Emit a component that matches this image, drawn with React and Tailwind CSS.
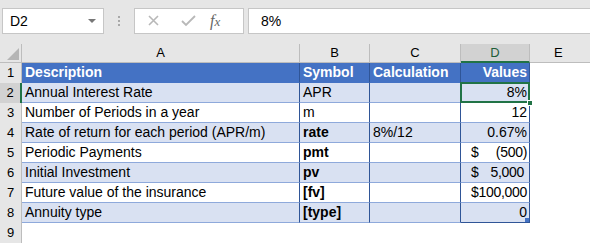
const rows = [
  { n: 1, a: "Description", b: "Symbol", c: "Calculation", d: "Values", head: true },
  { n: 2, a: "Annual Interest Rate", b: "APR", c: "", d: "8%", band: true },
  { n: 3, a: "Number of Periods in a year", b: "m", c: "", d: "12" },
  { n: 4, a: "Rate of return for each period (APR/m)", b: "rate", c: "8%/12", d: "0.67%", band: true, bold: true },
  { n: 5, a: "Periodic Payments", b: "pmt", c: "", d: ["$", "(500)", ""], bold: true },
  { n: 6, a: "Initial Investment", b: "pv", c: "", d: ["$", "5,000", "pad"], band: true, bold: true },
  { n: 7, a: "Future value of the insurance", b: "[fv]", c: "", d: ["", "$100,000", "pad"], bold: true },
  { n: 8, a: "Annuity type", b: "[type]", c: "", d: "0", band: true, bold: true, last: true },
];

const font = { fontFamily: "'Liberation Sans', Arial, sans-serif" };

function ValueCell({ v }) {
  if (Array.isArray(v)) {
    return (
      <div className="flex w-full items-center justify-between pl-[10px]">
        <span>{v[0]}</span>
        <span className={`tracking-[-0.3px] ${v[2] === "pad" ? "pr-[5px]" : "pr-[2px]"}`}>{v[1]}</span>
      </div>
    );
  }
  return <div className="w-full pr-[2px] text-right">{v}</div>;
}

export default function App() {
  return (
    <div className="h-[243px] w-[590px] overflow-hidden bg-[#e6e6e6] text-[14px] text-black" style={font}>
      {/* formula bar */}
      <div className="flex h-[44px] items-start pt-[8px]">
        <div className="ml-[2px] flex h-[26px] w-[102px] items-center justify-between border border-[#c6c6c6] bg-white pl-[7px] pr-[7px] text-[14px]">
          <span>D2</span>
          <span className="h-0 w-0 border-x-[4px] border-t-[4px] border-x-transparent border-t-[#777]" />
        </div>
        <div className="flex h-[26px] w-[30px] flex-col items-center justify-center gap-[2px]">
          <span className="h-[2px] w-[2px] bg-[#a8a8a8]" />
          <span className="h-[2px] w-[2px] bg-[#a8a8a8]" />
          <span className="h-[2px] w-[2px] bg-[#a8a8a8]" />
        </div>
        <div className="flex h-[26px] w-[110px] items-center border border-[#c6c6c6] bg-white">
          <svg width="36" height="24" viewBox="0 0 36 24">
            <path d="M14 7l9 9M23 7l-9 9" stroke="#b8b8b8" strokeWidth="1.6" fill="none" />
          </svg>
          <svg width="36" height="24" viewBox="0 0 36 24">
            <path d="M11 12l4 4 9-9" stroke="#b8b8b8" strokeWidth="1.8" fill="none" />
          </svg>
          <span className="ml-[3px] text-[16px] italic text-[#666]" style={{ fontFamily: "'Liberation Serif', serif" }}>
            f<span className="text-[13px]">x</span>
          </span>
        </div>
        <div className="ml-[4px] flex h-[26px] flex-1 items-center border border-[#c6c6c6] border-r-0 bg-white pl-[12px]">
          8%
        </div>
      </div>

      {/* sheet */}
      <div className="grid grid-cols-[22px_278px_70px_91px_69px_1fr] bg-white">
        {/* column headers */}
        <div className="relative h-[19px] border-b border-r border-[#bdbdbd] bg-[#e6e6e6]">
          <span className="absolute bottom-[2px] right-[2px] h-0 w-0 border-b-[12px] border-l-[12px] border-b-[#b5b5b5] border-l-transparent" />
        </div>
        {["A", "B", "C"].map((c) => (
          <div key={c} className="flex h-[19px] items-center justify-center border-b border-r border-[#bdbdbd] bg-[#e6e6e6] text-[13px]">
            {c}
          </div>
        ))}
        <div className="flex h-[19px] items-center justify-center border-b-2 border-r border-b-[#217346] border-r-[#bdbdbd] bg-[#d2d2d2] text-[13px] text-[#1e5e3a]">
          D
        </div>
        <div className="flex h-[19px] items-center justify-start border-b border-[#bdbdbd] bg-[#e6e6e6] pl-[24px] text-[13px]">
          E
        </div>

        {rows.map((r) => {
          const bg = r.head ? "bg-[#4472c4] text-white font-bold" : r.band ? "bg-[#d9e1f2]" : "bg-white";
          const line = r.head ? "border-b border-[#4472c4]" : "border-b border-[#8ea9db]";
          return [
            <div
              key={r.n + "h"}
              className={`flex h-[20px] items-center justify-center border-r text-[13px] ${
                r.n === 2 ? "border-r-2 border-r-[#217346] bg-[#d2d2d2]" : "border-r-[#bdbdbd] bg-[#e6e6e6]"
              }`}
            >
              {r.n}
            </div>,
            <div key={r.n + "a"} className={`flex h-[20px] items-center pl-[3px] border-r border-r-[#2f5597] ${line} ${bg}`}>
              {r.a}
            </div>,
            <div
              key={r.n + "b"}
              className={`flex h-[20px] items-center pl-[3px] border-r border-r-[#2f5597] ${line} ${bg} ${r.bold ? "font-bold" : ""}`}
            >
              {r.b}
            </div>,
            <div key={r.n + "c"} className={`flex h-[20px] items-center pl-[3px] border-r border-r-[#2f5597] ${line} ${bg}`}>
              {r.c}
            </div>,
            <div
              key={r.n + "d"}
              className={`relative flex h-[20px] items-center border-r border-r-[#2f5597] ${line} ${bg} ${
                r.last ? "border-b-[#2f5597]" : ""
              }`}
            >
              {r.n === 2 && (
                <>
                  <span className="pointer-events-none absolute inset-[-1px] border-2 border-[#217346]" />
                  <span className="absolute bottom-[-4px] right-[-4px] z-10 h-[6px] w-[6px] border border-white bg-[#217346]" />
                </>
              )}
              {r.last && <span className="absolute bottom-0 right-0 h-[4px] w-[4px] bg-[#4472c4]" />}
              <ValueCell v={r.d} />
            </div>,
            <div key={r.n + "e"} className="h-[20px] bg-white" />,
          ];
        })}
        <div className="flex h-[20px] items-center justify-center border-r border-r-[#bdbdbd] bg-[#e6e6e6] text-[13px]">9</div>
        <div className="col-span-5 h-[20px] bg-white" />
      </div>
    </div>
  );
}
